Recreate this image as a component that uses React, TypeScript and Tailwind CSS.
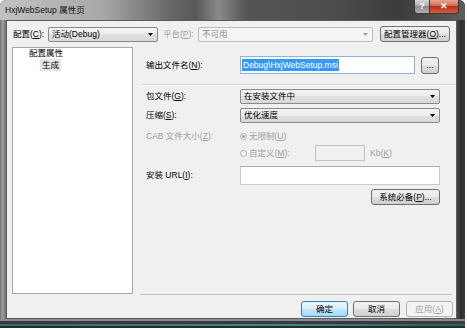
const btn =
  "flex items-center justify-center rounded-[3px] border border-[#707070] bg-[linear-gradient(#f2f2f2,#ebebeb_45%,#dddddd_55%,#cfcfcf)] text-black";

function Arrow({ disabled }: { disabled?: boolean }) {
  return (
    <svg width="5" height="3" viewBox="0 0 5 3" className="ml-auto mr-[4px]">
      <path d="M0 0H5L2.5 3Z" fill={disabled ? "#a0a0a0" : "#000"} />
    </svg>
  );
}

function Select({ value, w }: { value: string; w: string }) {
  return (
    <div
      className={`${w} h-[15px] flex items-center rounded-[2px] border border-[#8a8a8a] bg-[linear-gradient(#f4f4f4,#ececec_50%,#e0e0e0_50%,#d8d8d8)] pl-[3px]`}
    >
      <span>{value}</span>
      <Arrow />
    </div>
  );
}

function Radio({ checked, label }: { checked?: boolean; label: React.ReactNode }) {
  return (
    <div className="flex items-center text-[#a0a0a0]">
      <div className="w-[7px] h-[7px] rounded-full border border-[#b0b0b0] bg-[#f4f4f4] flex items-center justify-center">
        {checked && <div className="w-[3px] h-[3px] rounded-full bg-[#a0a0a0]" />}
      </div>
      <span className="ml-[2px]">{label}</span>
    </div>
  );
}

export default function App() {
  return (
    <div className="w-[467px] h-[330px] bg-white overflow-hidden font-['Liberation_Sans','Noto_Sans_CJK_SC',sans-serif] text-[8.5px] leading-none text-black">
      <div className="w-[465px] h-[328px] flex flex-col rounded-t-[6px] overflow-hidden bg-[#3a3a3a]">
        {/* title bar */}
        <div className="h-[20px] flex bg-[linear-gradient(to_right,#c2c2c2,#a8a8a8_22%,#6a6a6a_36%,#585858_42%,#8a8a8a_47%,#555555_53%,#4e4e4e_70%,#3c3c3c_86%,#5e5e5e)]">
          <span className="ml-[5px] mt-[6px] text-[#111]">HxjWebSetup 属性页</span>
          <div className="ml-auto mr-[6px] flex h-[14px]">
            <div className="w-[16px] flex items-center justify-center rounded-bl-[4px] border border-t-0 border-[#3a3a3a] bg-[linear-gradient(#d8d8d8,#a8a8a8_50%,#8c8c8c_50%,#b0b0b0)] text-white text-[9px] font-bold">
              ?
            </div>
            <div className="w-[29px] flex items-center justify-center rounded-br-[4px] border border-l-0 border-t-0 border-[#3a3a3a] bg-[linear-gradient(#e8a393,#d0624a_50%,#b93018_50%,#d06040)] text-white text-[9px] font-bold">
              ✕
            </div>
          </div>
        </div>

        <div className="flex-1 flex">
          <div className="w-[6px] bg-[linear-gradient(to_right,#6a6a6a,#a0a0a0_35%,#8a8a8a_70%,#6e6e6e)]" />

          {/* dialog body */}
          <div className="w-[451px] bg-[#f0f0f0] border border-[#5a5a5a] flex flex-col">
            {/* config row */}
            <div className="mt-[5px] h-[16px] flex items-center pl-[6px]">
              <span className="w-[35px]">
                配置(<u>C</u>):
              </span>
              <Select w="w-[110px]" value="活动(Debug)" />
              <span className="ml-[5px] w-[35px] text-[#a0a0a0]">
                平台(<u>P</u>):
              </span>
              <div className="w-[175px] h-[15px] flex items-center rounded-[2px] border border-[#b8bcbf] bg-[#f4f4f4] pl-[3px] text-[#8a8a8a]">
                <span>不可用</span>
                <Arrow disabled />
              </div>
              <div className={`${btn} ml-[7px] w-[70px] h-[16px]`}>
                配置管理器(<u>O</u>)...
              </div>
            </div>

            <div className="mt-[5px] flex">
              {/* tree */}
              <div className="ml-[5px] w-[121px] h-[247px] border border-[#a8a8a8] bg-white flex flex-col">
                <div className="h-[11px] flex items-center pl-[16px]">配置属性</div>
                <div className="h-[12px] flex items-center pl-[27px]">
                  <span className="h-[12px] flex items-center px-[2px] bg-[#e6e6e6]">生成</span>
                </div>
              </div>

              {/* properties */}
              <div className="flex-1 pl-[9px] flex flex-col">
                <div className="w-[298px] pl-[4px] mt-[9px] h-[18px] flex items-center">
                  <span className="w-[94px]">
                    输出文件名(<u>N</u>):
                  </span>
                  <div className="w-[175px] h-[18px] flex items-center border border-[#8fb2d9] bg-white pl-[1px]">
                    <span className="h-[12px] flex items-center px-[1px] bg-[#3399ff] text-white">
                      Debug\HxjWebSetup.msi
                    </span>
                  </div>
                  <div className={`${btn} ml-[6px] w-[18px] h-[17px]`}>...</div>
                </div>

                <div className="mt-[10px] h-px bg-[#d6d6d6]" />
                <div className="h-px bg-white" />

                <div className="w-[298px] pl-[4px] mt-[3px] flex items-center">
                  <span className="w-[94px]">
                    包文件(<u>G</u>):
                  </span>
                  <Select w="w-[200px]" value="在安装文件中" />
                </div>
                <div className="w-[298px] pl-[4px] mt-[4px] flex items-center">
                  <span className="w-[94px]">
                    压缩(<u>S</u>):
                  </span>
                  <Select w="w-[200px]" value="优化速度" />
                </div>

                <div className="w-[298px] pl-[4px] mt-[7px] h-[12px] flex items-center">
                  <span className="w-[94px] text-[#a0a0a0]">
                    CAB 文件大小(<u>Z</u>):
                  </span>
                  <Radio
                    checked
                    label={
                      <>
                        无限制(<u>U</u>)
                      </>
                    }
                  />
                </div>
                <div className="w-[298px] pl-[98px] mt-[3px] h-[16px] flex items-center">
                  <div className="w-[75px]">
                    <Radio
                      label={
                        <>
                          自定义(<u>M</u>):
                        </>
                      }
                    />
                  </div>
                  <div className="w-[50px] h-[16px] border border-[#c4c4c4] bg-[#f0f0f0]" />
                  <span className="ml-[5px] text-[#a0a0a0]">
                    Kb(<u>K</u>)
                  </span>
                </div>

                <div className="w-[298px] pl-[4px] mt-[5px] flex items-center">
                  <span className="w-[94px]">
                    安装 URL(<u>I</u>):
                  </span>
                  <div className="w-[200px] h-[19px] border border-[#c8cace] border-t-[#abadb3] bg-white" />
                </div>
                <div className="w-[298px] mt-[4px] flex justify-end">
                  <div className={`${btn} w-[69px] h-[16px]`}>
                    系统必备(<u>P</u>)...
                  </div>
                </div>
              </div>
            </div>

            <div className="ml-[133px] w-[312px] h-px bg-[#c4c4c4]" />

            {/* dialog buttons */}
            <div className="mt-[6px] pl-[294px] flex">
              <div className="w-[47px] h-[16px] flex items-center justify-center rounded-[3px] border border-[#3c7fb1] bg-[linear-gradient(#eaf6fd,#d9f0fc_45%,#bee6fd_55%,#a7d9f5)]">
                确定
              </div>
              <div className={`${btn} ml-[5px] w-[47px] h-[16px]`}>取消</div>
              <div className="ml-[6px] w-[47px] h-[16px] flex items-center justify-center rounded-[3px] border border-[#adb2b5] bg-[#f4f4f4] text-[#a0a0a0]">
                应用(<u>A</u>)
              </div>
            </div>
          </div>

          <div className="flex-1 bg-[linear-gradient(to_right,#4a4a4a,#2e2e2e_50%,#3a3a3a)]" />
        </div>

        {/* bottom frame */}
        <div className="h-[9px] flex flex-col">
          <div className="h-[2px] bg-[#8c8c8c]" />
          <div className="h-[3px] bg-[#3a3a3a]" />
          <div className="h-[2px] bg-[linear-gradient(to_right,#2f6d74,#3b8a92_60%,#2a5d63)]" />
          <div className="flex-1 bg-[#2a2a2a]" />
        </div>
      </div>
    </div>
  );
}
